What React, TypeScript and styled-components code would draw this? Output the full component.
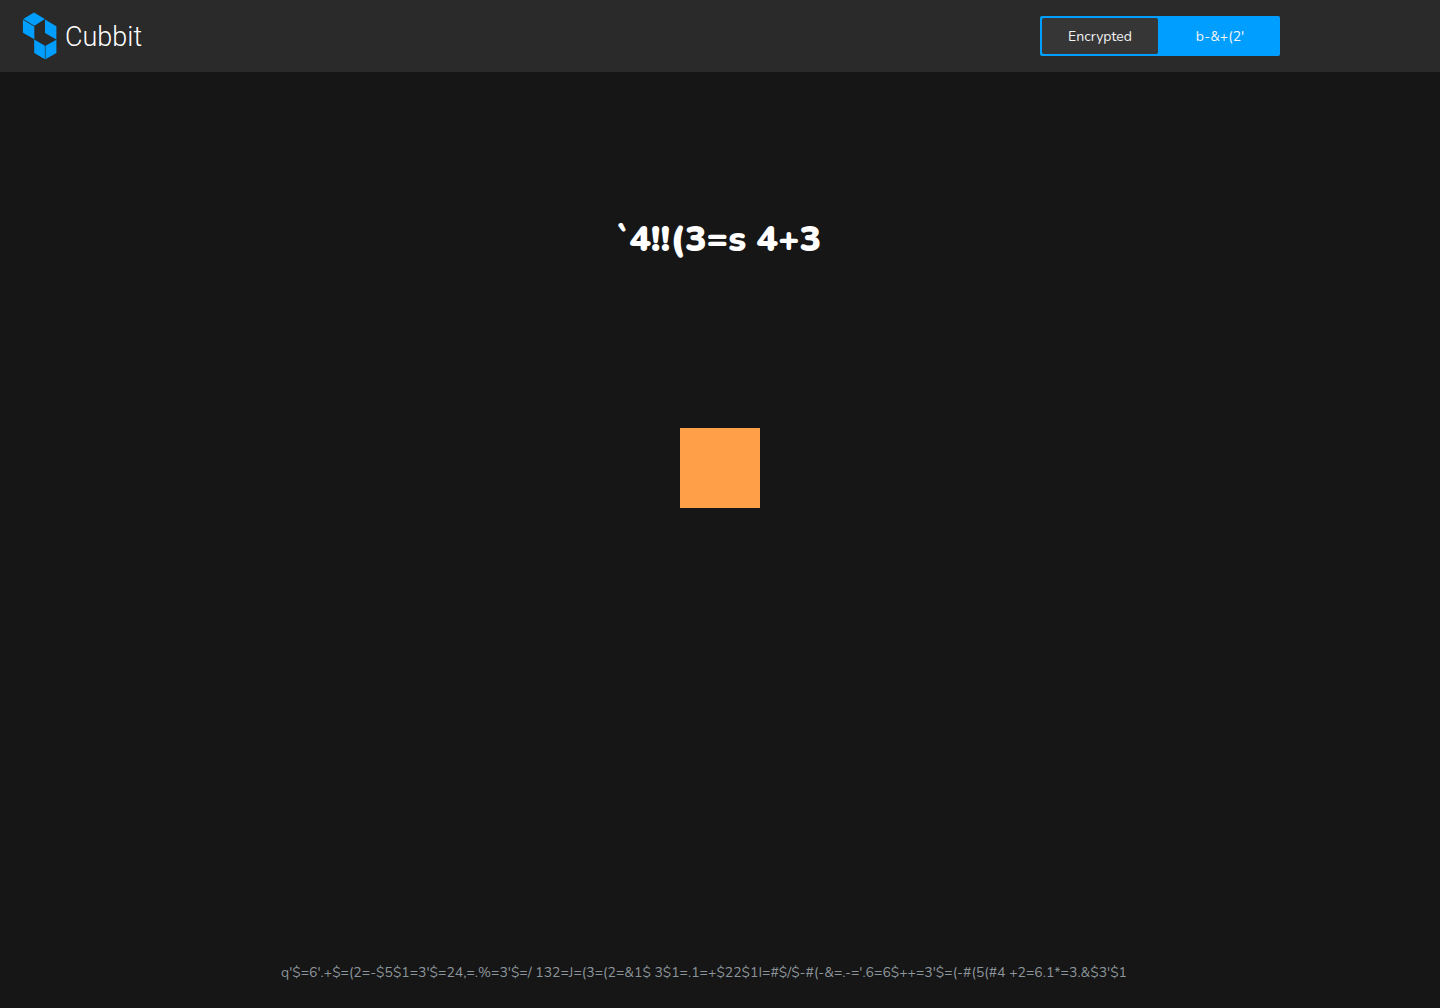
import React, { useState } from "react";
import styled, { createGlobalStyle } from "styled-components";

const GlobalStyle = createGlobalStyle`
  *, *::before, *::after { box-sizing: border-box; }
  body {
    margin: 0;
    background: #161616;
    font-family: Nunito, "Open Sans", sans-serif;
    -webkit-font-smoothing: antialiased;
  }
`;

const Page = styled.div`
  display: flex;
  flex-direction: column;
  min-height: 100vh;
  background: #161616;
`;

const Header = styled.header`
  display: flex;
  align-items: center;
  justify-content: space-between;
  height: 72px;
  padding: 0 160px 0 22px;
  background: #2a2a2a;
`;

const Brand = styled.a`
  display: flex;
  align-items: center;
  gap: 7px;
  color: #ffffff;
  text-decoration: none;
`;

const Wordmark = styled.span`
  padding-top: 2px;
  font: 300 27px/48px Roboto, sans-serif;
`;

const Switch = styled.div`
  display: flex;
  width: 240px;
  height: 40px;
  border-radius: 2px;
  background: #009eff;
`;

const Option = styled.button<{ $active: boolean }>`
  flex: 1;
  padding: 1px 0 0;
  border: 2px solid #009eff;
  border-radius: 4px;
  background: ${({ $active }) => ($active ? "#363636" : "#009eff")};
  color: #f4f4f4;
  font: 400 14px/21px Nunito, Lato, sans-serif;
  cursor: pointer;
`;

const Main = styled.main`
  display: flex;
  flex: 1;
  flex-direction: column;
  align-items: center;
  padding-top: 144px;
`;

const Title = styled.h1`
  margin: 0;
  padding-right: 4px;
  color: #ffffff;
  font: 900 36px/48px Nunito, Lato, sans-serif;
`;

const Square = styled.div`
  width: 80px;
  height: 80px;
  margin-top: 164px;
  background: #ffa048;
`;

const Footer = styled.footer`
  padding: 0 32px 23px 0;
  color: #8c959b;
  font: 400 14px/24px Nunito, "Open Sans", sans-serif;
  text-align: center;
`;

const Logo = () => (
  <svg width="36" height="48" viewBox="22 12 36 48" fill="#009eff" aria-hidden="true">
    <path d="M34 12.6 44.9 19 34.5 25.7 23.2 19.1Z" />
    <path d="M22.9 19.8 34.3 26.6V39.3L22.9 32.7Z" />
    <path d="M45 19.4 56.4 26.2V39.4L45 33Z" />
    <path d="M34.2 39.5 44.9 45.7V59.2L34.2 53.1Z" />
    <path d="M56.4 39.7 45.5 45.7V59.2L56.4 53.1Z" />
  </svg>
);

const modes = ["Encrypted", "b-&+(2'"];

export default function App() {
  const [mode, setMode] = useState(modes[0]);
  return (
    <Page>
      <GlobalStyle />
      <Header>
        <Brand href="#">
          <Logo />
          <Wordmark>Cubbit</Wordmark>
        </Brand>
        <Switch>
          {modes.map((name) => (
            <Option
              key={name}
              type="button"
              $active={mode === name}
              aria-pressed={mode === name}
              onClick={() => setMode(name)}
            >
              {name}
            </Option>
          ))}
        </Switch>
      </Header>
      <Main>
        <Title>`4!!(3=s 4+3</Title>
        <Square />
      </Main>
      <Footer>
        {"q'$=6'.+$=(2=-$5$1=3'$=24,=.%=3'$=/ 132=J=(3=(2=&1$ 3$1=.1=+$22$1I=#$/$-#(-&=.-='.6=6$++=3'$=(-#(5(#4 +2=6.1*=3.&$3'$1"}
      </Footer>
    </Page>
  );
}
